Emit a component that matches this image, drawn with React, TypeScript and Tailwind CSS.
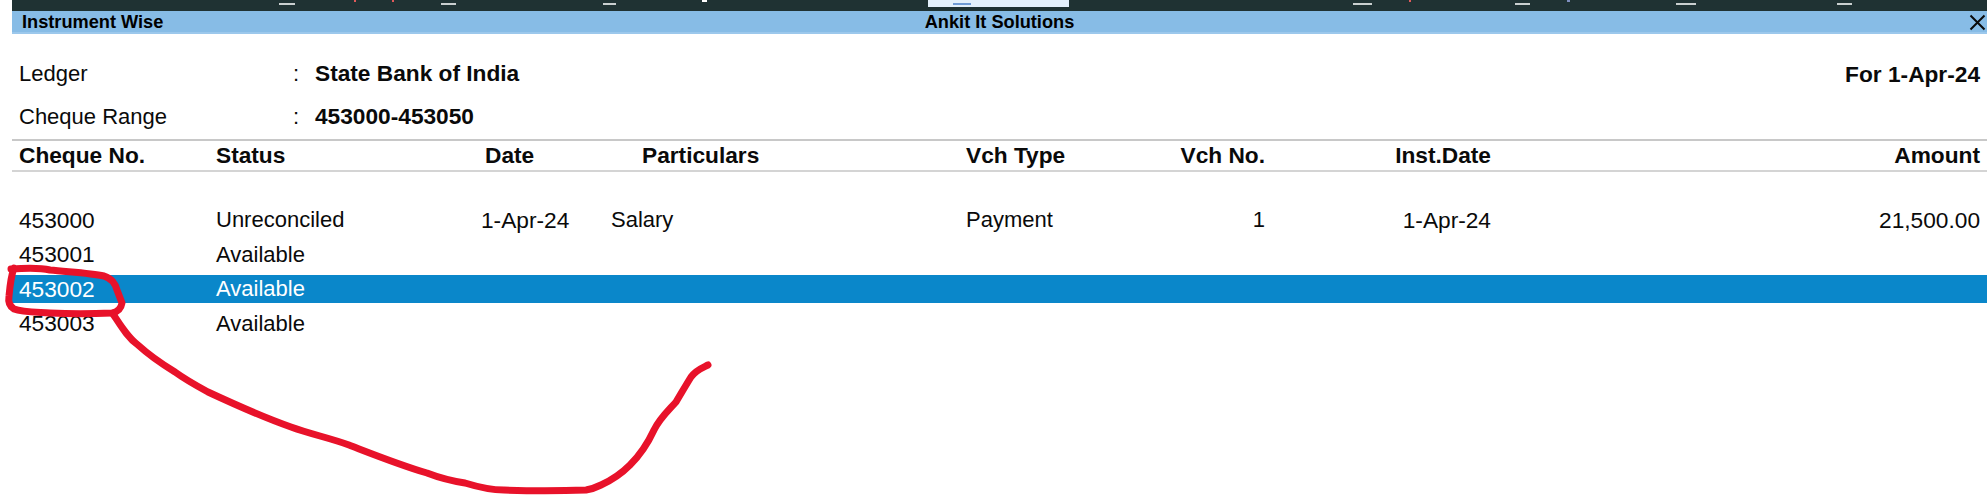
const colsClass = 'grid grid-cols-[197px_220px_134px_396px_139px_160px_226px_1fr] items-center pl-[7px] pr-[7px]'

type Row = {
  cheque: string
  status: string
  date?: string
  particulars?: string
  vchType?: string
  vchNo?: string
  instDate?: string
  amount?: string
  selected?: boolean
}

const rows: Row[] = [
  {
    cheque: '453000',
    status: 'Unreconciled',
    date: '1-Apr-24',
    particulars: 'Salary',
    vchType: 'Payment',
    vchNo: '1',
    instDate: '1-Apr-24',
    amount: '21,500.00',
  },
  { cheque: '453001', status: 'Available' },
  { cheque: '453002', status: 'Available', selected: true },
  { cheque: '453003', status: 'Available' },
]

function TopStrip() {
  return (
    <div className="flex h-[11px] items-start overflow-hidden bg-[#1f3233]">
      <div className="ml-[267px] mt-[3px] h-[2px] w-[16px] bg-[#c9cfcf]" />
      <div className="ml-[59px] h-[2px] w-[2px] bg-[#e05a5a]" />
      <div className="ml-[36px] h-[2px] w-[2px] bg-[#e05a5a]" />
      <div className="ml-[47px] mt-[3px] h-[2px] w-[15px] bg-[#c9cfcf]" />
      <div className="ml-[147px] mt-[3px] h-[2px] w-[13px] bg-[#c9cfcf]" />
      <div className="ml-[86px] h-[2px] w-[5px] bg-white" />
      <div className="ml-[221px] h-[7px] w-[141px] bg-[#e3f0fb] pt-[3px] pl-[25px]">
        <div className="h-[2px] w-[18px] bg-[#6f9bd4]" />
      </div>
      <div className="ml-[284px] mt-[3px] h-[2px] w-[19px] bg-[#c9cfcf]" />
      <div className="ml-[37px] h-[2px] w-[2px] bg-[#e05a5a]" />
      <div className="ml-[104px] mt-[3px] h-[2px] w-[15px] bg-[#c9cfcf]" />
      <div className="ml-[37px] h-[2px] w-[3px] bg-[#7f8fc0]" />
      <div className="ml-[106px] mt-[3px] h-[2px] w-[20px] bg-[#c9cfcf]" />
      <div className="ml-[141px] mt-[3px] h-[2px] w-[15px] bg-[#c9cfcf]" />
    </div>
  )
}

function TitleBar() {
  return (
    <div className="grid h-[23px] grid-cols-[1fr_auto_1fr] items-center border-b-2 border-[#9cc8ec] bg-[#87bce6] pl-[10px] pr-[10px] pt-[2px] text-[18.2px] font-bold leading-none text-black">
      <span>Instrument Wise</span>
      <span>Ankit It Solutions</span>
      <svg className="-mr-[10px] justify-self-end" width="18" height="18" viewBox="0 0 18 18" fill="none" stroke="#0a0a0a" strokeWidth="2">
        <path d="M1.5 1.5 15.5 15.5M15.5 1.5 1.5 15.5" />
      </svg>
    </div>
  )
}

function InfoLine({ label, value }: { label: string; value: string }) {
  return (
    <div className="flex h-[43px] items-center">
      <span className="w-[274px]">{label}</span>
      <span className="w-[22px]">:</span>
      <span className="text-[22.7px] font-bold">{value}</span>
    </div>
  )
}

export default function App() {
  return (
    <div className="relative h-[502px] w-[1987px] overflow-hidden bg-white font-['Liberation_Sans',Arial,sans-serif] text-[22px] leading-none text-[#0a0a0a]">
      <div className="pl-3">
        <TopStrip />
        <TitleBar />

        {/* Ledger info */}
        <div className="relative pl-[7px] pr-[7px] pt-[18px]">
          <InfoLine label="Ledger" value="State Bank of India" />
          <InfoLine label="Cheque Range" value="453000-453050" />
          <span className="absolute right-[7px] top-[29px] text-[22.7px] font-bold">For 1-Apr-24</span>
        </div>

        {/* Column headers */}
        <div className={`${colsClass} mt-[0.5px] h-[33px] border-y-2 border-t-[#c8c8c8] border-b-[#d4d4d4] text-[22.7px] font-bold`}>
          <span>Cheque No.</span>
          <span>Status</span>
          <span className="pl-[49px]">Date</span>
          <span className="pl-[72px]">Particulars</span>
          <span>Vch Type</span>
          <span className="text-right">Vch No.</span>
          <span className="text-right">Inst.Date</span>
          <span className="text-right">Amount</span>
        </div>

        {/* Rows */}
        <div className="mt-[34.5px] flex flex-col gap-[6.5px]">
          {rows.map((row) => (
            <div
              key={row.cheque}
              className={`${colsClass} h-[28px] ${row.selected ? 'bg-[#0a87ca] text-white' : ''}`}
            >
              <span className="text-[22.7px]">{row.cheque}</span>
              <span>{row.status}</span>
              <span className="pl-[45px] text-[22.7px]">{row.date}</span>
              <span className="pl-[41px]">{row.particulars}</span>
              <span>{row.vchType}</span>
              <span className="text-right">{row.vchNo}</span>
              <span className="text-right text-[22.7px]">{row.instDate}</span>
              <span className="text-right text-[22.7px]">{row.amount}</span>
            </div>
          ))}
        </div>
      </div>

      {/* Red pen annotation */}
      <svg className="absolute left-0 top-0" width="1987" height="502" viewBox="0 0 1987 502" fill="none" stroke="#e8122a" strokeWidth="7" strokeLinecap="round" strokeLinejoin="round">
        <path d="M11 269C24 268 38 267 50 270C68 272 90 273 104 276C112 279 115 283 117 290L122 303C121 309 118 312 112 313C90 314 70 314 50 313C35 312 22 312 14 309C9 306 8 302 9 296C10 285 11 276 14 268" />
        <path d="M113 314C121 326 128 338 138 345C150 356 162 364 175 372C186 380 197 386 208 392C236 405 262 417 291 427C310 434 330 438 349 445C375 455 400 465 427 473C440 478 452 481 465 483C478 487 491 490 504 490C530 491 560 491 586 490C592 489 597 487 601 485C612 480 622 473 630 465C642 453 648 443 654 430C660 418 668 411 676 402C682 392 686 385 691 377C696 370 702 368 708 365" />
      </svg>
    </div>
  )
}
